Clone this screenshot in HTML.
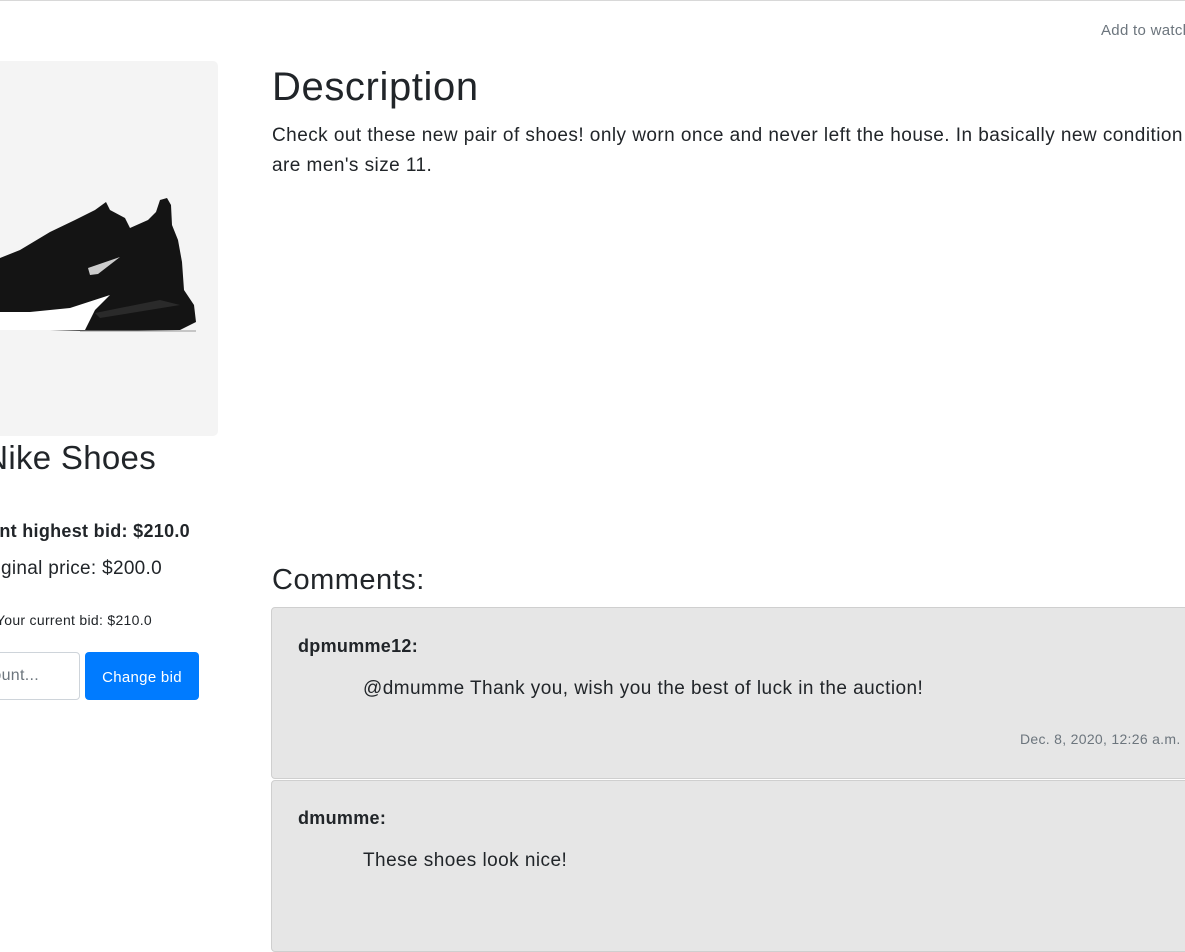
<!DOCTYPE html>
<html><head><meta charset="utf-8"><style>
*{margin:0;padding:0;box-sizing:border-box}
body{width:1185px;height:889px;overflow:hidden;position:relative;background:#fff;font-family:"Liberation Sans",sans-serif;color:#212529;letter-spacing:0.3px}
.a{position:absolute;white-space:nowrap}
.r{text-align:right}
</style></head><body>
<div class="a" style="left:0;top:0;width:1185px;height:1px;background:#d8d8d8"></div>
<div class="a" style="left:1101px;top:22px;font-size:15px;color:#6c757d">Add to watchlist</div>
<div class="a" style="left:-200px;top:61px;width:418px;height:375px;background:#f4f4f4;border-radius:5px;overflow:hidden">
<svg width="418" height="375" viewBox="-200 61 418 375" style="position:absolute;left:0;top:0">
<path d="M-10 262 L20 250 L50 232 L75 220 L95 210 L106 202 L110 210 L125 218 L130 228 L148 220 L156 212 L160 200 L167 198 L171 205 L172 225 L178 240 L182 262 L184 290 L194 305 L196 322 L180 330 L90 331 L50 330 L-10 330 Z" fill="#141414"/>
<path d="M-10 312 L30 312 L70 308 L110 295 L95 310 L85 330 L-10 330 Z" fill="#fff"/>
<path d="M88 268 L120 257 L98 274 L90 275 Z" fill="#ccc"/>
<path d="M95 313 L160 300 L180 305 L100 318 Z" fill="#2a2a2a"/>
<path d="M80 331 L196 331" stroke="#999" stroke-width="1"/>
</svg></div>
<div class="a r" style="right:1029px;top:439px;font-size:33px">Nike Shoes</div>
<div class="a r" style="right:995px;top:521px;font-size:18px;font-weight:bold">Current highest bid: $210.0</div>
<div class="a r" style="right:1023px;top:558px;font-size:19px">Original price: $200.0</div>
<div class="a r" style="right:1033px;top:612px;font-size:14px">Your current bid: $210.0</div>
<div class="a" style="left:-100px;top:652px;width:180px;height:48px;border:1px solid #ced4da;border-radius:4px"></div>
<div class="a r" style="right:1146px;top:667px;font-size:16px;color:#6c757d">Bid amount...</div>
<div class="a" style="left:85px;top:652px;width:114px;height:48px;background:#007bff;border-radius:4px;color:#fff;font-size:15px;line-height:52px;text-align:center">Change bid</div>
<div class="a" style="left:272px;top:65px;font-size:40px;letter-spacing:0.6px">Description</div>
<div class="a" style="left:272px;top:121px;font-size:19px;line-height:30px;letter-spacing:0.45px">Check out these new pair of shoes! only worn once and never left the house. In basically new condition and<br>are men's size 11.</div>
<div class="a" style="left:272px;top:564px;font-size:29px;letter-spacing:0.5px">Comments:</div>
<div class="a" style="left:271px;top:607px;width:940px;height:172px;background:#e6e6e6;border:1px solid #cfcfcf;border-radius:4px"></div>
<div class="a" style="left:298px;top:636px;font-size:18px;font-weight:bold">dpmumme12:</div>
<div class="a" style="left:363px;top:678px;font-size:19px;letter-spacing:0.45px">@dmumme Thank you, wish you the best of luck in the auction!</div>
<div class="a" style="left:1020px;top:731px;font-size:14px;color:#6c757d">Dec. 8, 2020, 12:26 a.m.</div>
<div class="a" style="left:271px;top:780px;width:940px;height:172px;background:#e6e6e6;border:1px solid #cfcfcf;border-radius:4px"></div>
<div class="a" style="left:298px;top:808px;font-size:18px;font-weight:bold">dmumme:</div>
<div class="a" style="left:363px;top:850px;font-size:19px;letter-spacing:0.45px">These shoes look nice!</div>
</body></html>
